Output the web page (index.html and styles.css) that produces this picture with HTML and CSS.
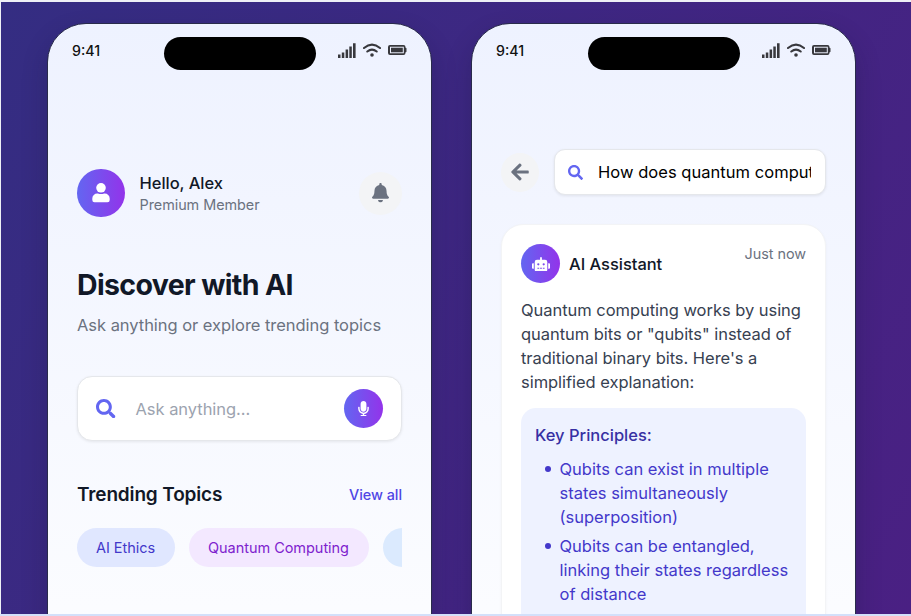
FILE: index.html
```html
<!DOCTYPE html>
<html lang="en">
<head>
<meta charset="utf-8">
<title>AI Search</title>
<link rel="stylesheet" href="styles.css">
</head>
<body>
<svg width="0" height="0" class="defs" aria-hidden="true">
  <symbol id="signal" viewBox="0 0 18 15"><path d="M0 11.500h2.500V15H0zM3.800 9.500h2.500V15H3.800zM7.600 6.500h2.500V15H7.600zM11.300 3.500h2.500v11.500h-2.500zM15 .3h2.600V15H15z"/></symbol>
  <symbol id="wifi" viewBox="0 0 18 15"><path class="arc" d="M1 5q8-6.600 16 0M4.300 8.500q4.700-3.700 9.400 0"/><circle cx="9" cy="12" r="1.800"/></symbol>
  <symbol id="battery" viewBox="0 0 19 10"><path fill-rule="evenodd" d="M2 0h13.500a2 2 0 0 1 2 2v.8h.2a.8.8 0 0 1 .8.8v2.800a.8.8 0 0 1-.8.8h-.2V8a2 2 0 0 1-2 2H2a2 2 0 0 1-2-2V2a2 2 0 0 1 2-2zm0 1.700v6.600h13.800V1.700z"/><path d="M3 2.700h11.800v4.600H3z"/></symbol>
  <symbol id="user" viewBox="0 0 18 20"><circle cx="9" cy="4.800" r="4.800"/><path d="M.3 17v-1.500a5 5 0 0 1 5-5h.6q3.100 1.200 6.200 0h.6a5 5 0 0 1 5 5V17q0 2.200-2.200 2.200h-13Q.3 19.200.3 17z"/></symbol>
  <symbol id="bell" viewBox="0 0 448 512"><path d="M224 512c35.300 0 64-28.700 64-64H160c0 35.400 28.600 64 64 64zm215.400-149.700c-19.300-20.800-55.500-52-55.500-154.300 0-77.700-54.500-139.900-127.900-155.200V32c0-17.700-14.300-32-32-32s-32 14.300-32 32v20.800C118.600 68.100 64.100 130.300 64.100 208c0 102.300-36.200 133.500-55.500 154.300-6 6.500-8.700 14.200-8.600 21.700.1 16.400 13 32 32.100 32h383.800c19.100 0 32-15.600 32.100-32 .1-7.500-2.600-15.300-8.600-21.700z"/></symbol>
  <symbol id="search" viewBox="0 0 512 512"><path d="M505 442.700 405.300 343c-4.500-4.500-10.600-7-17-7H372c27.600-35.300 44-79.700 44-128C416 93.100 322.900 0 208 0S0 93.100 0 208s93.100 208 208 208c48.300 0 92.700-16.400 128-44v16.300c0 6.400 2.500 12.500 7 17l99.700 99.700c9.400 9.400 24.600 9.400 33.900 0l28.300-28.300c9.400-9.400 9.400-24.600.1-34zM208 336c-70.700 0-128-57.200-128-128 0-70.700 57.200-128 128-128 70.700 0 128 57.200 128 128 0 70.700-57.200 128-128 128z"/></symbol>
  <symbol id="mic" viewBox="0 0 352 512"><path d="M176 352c53 0 96-43 96-96V96c0-53-43-96-96-96S80 43 80 96v160c0 53 43 96 96 96zm160-160h-16c-8.800 0-16 7.200-16 16v48c0 74.800-64.500 134.800-140.800 127.400C96.700 376.900 48 317.100 48 250.300V208c0-8.800-7.200-16-16-16H16c-8.800 0-16 7.200-16 16v40.200c0 89.600 63.900 169.500 152 181.700V464H96c-8.800 0-16 7.200-16 16v16c0 8.800 7.200 16 16 16h160c8.800 0 16-7.200 16-16v-16c0-8.800-7.200-16-16-16h-56v-33.800C285.700 418.500 352 344.900 352 256v-48c0-8.800-7.200-16-16-16z"/></symbol>
  <symbol id="arrow" viewBox="0 0 448 512"><path d="m257.500 445.100-22.200 22.200c-9.400 9.400-24.600 9.400-33.900 0L7 273c-9.400-9.400-9.400-24.600 0-33.900L201.400 44.700c9.400-9.400 24.600-9.400 33.900 0l22.200 22.200c9.500 9.500 9.300 25-.4 34.300L136.600 216H424c13.300 0 24 10.700 24 24v32c0 13.300-10.700 24-24 24H136.600l120.500 114.800c9.800 9.300 10 24.800.4 34.300z"/></symbol>
  <symbol id="robot" viewBox="0 0 640 512"><path d="M32 224h32v192H32a31.960 31.960 0 0 1-32-32V256a31.960 31.960 0 0 1 32-32zm512-48v272a64.060 64.060 0 0 1-64 64H160a64.060 64.060 0 0 1-64-64V176a79.970 79.970 0 0 1 80-80h112V32a32 32 0 0 1 64 0v64h112a79.970 79.970 0 0 1 80 80zm-280 80a40 40 0 1 0-40 40 40 40 0 0 0 40-40zm-8 128h-64v32h64zm96 0h-64v32h64zm104-128a40 40 0 1 0-40 40 40 40 0 0 0 40-40zm-8 128h-64v32h64zm192-128v128a31.960 31.960 0 0 1-32 32h-32V224h32a31.960 31.960 0 0 1 32 32z"/></symbol>
</svg>
<main class="stage">
  <section class="phone">
    <header class="status">
      <span class="time">9:41</span>
      <div class="island"></div>
      <div class="indicators"><svg class="i-signal"><use href="#signal"/></svg><svg class="i-wifi"><use href="#wifi"/></svg><svg class="i-battery"><use href="#battery"/></svg></div>
    </header>
    <div class="home">
      <div class="profile">
        <div class="avatar"><svg><use href="#user"/></svg></div>
        <div class="who"><p class="hello">Hello, Alex</p><p class="tier">Premium Member</p></div>
        <div class="round bell"><svg><use href="#bell"/></svg></div>
      </div>
      <h1>Discover with AI</h1>
      <p class="lead">Ask anything or explore trending topics</p>
      <div class="ask">
        <svg class="lens"><use href="#search"/></svg>
        <span class="placeholder">Ask anything...</span>
        <div class="mic"><svg><use href="#mic"/></svg></div>
      </div>
      <div class="section-head"><h2>Trending Topics</h2><span class="view">View all</span></div>
      <div class="chips"><span class="chip indigo">AI Ethics</span><span class="chip purple">Quantum Computing</span><span class="chip blue"></span></div>
    </div>
  </section>
  <section class="phone">
    <header class="status">
      <span class="time">9:41</span>
      <div class="island"></div>
      <div class="indicators"><svg class="i-signal"><use href="#signal"/></svg><svg class="i-wifi"><use href="#wifi"/></svg><svg class="i-battery"><use href="#battery"/></svg></div>
    </header>
    <div class="chat">
      <div class="query-row">
        <div class="round back"><svg><use href="#arrow"/></svg></div>
        <div class="query"><svg><use href="#search"/></svg><span class="query-text">How does quantum comput</span></div>
      </div>
      <article class="answer">
        <div class="answer-head"><div class="bot"><svg><use href="#robot"/></svg></div><span class="name">AI Assistant</span><span class="when">Just now</span></div>
        <p class="body">Quantum computing works by using<br>quantum bits or "qubits" instead of<br>traditional binary bits. Here's a<br>simplified explanation:</p>
        <div class="key">
          <h3>Key Principles:</h3>
          <ul>
            <li>Qubits can exist in multiple<br>states simultaneously<br>(superposition)</li>
            <li>Qubits can be entangled,<br>linking their states regardless<br>of distance</li>
          </ul>
        </div>
      </article>
    </div>
  </section>
</main>
</body>
</html>
```
FILE: styles.css
```css
* { box-sizing: border-box; margin: 0; padding: 0; }
body {
  height: 616px;
  overflow: hidden;
  background: #eef0f6;
  border-bottom: 2px solid #d3e0fa;
  padding: 2px 0 0 1px;
  font-family: Inter, "Liberation Sans", sans-serif;
  font-size: 16.500px;
  line-height: 24px;
  letter-spacing: -0.040px;
  white-space: nowrap;
}
.defs { display: none; }
svg { display: block; fill: currentColor; flex: none; }
.arc { fill: none; stroke: currentColor; stroke-width: 2.100; stroke-linecap: round; }
.stage {
  height: 612px;
  overflow: hidden;
  display: flex;
  gap: 39px;
  padding: 21px 0 0 46px;
  background: linear-gradient(120deg, #342d82, #4a2083);
}
.phone {
  flex: none;
  width: 385px;
  height: 830px;
  border: 1px solid #292b4b;
  border-radius: 39px;
  background: linear-gradient(#eef2ff, #ffffff 760px);
  box-shadow: 0 12px 24px rgba(20, 20, 50, .25);
}
.status {
  display: grid;
  grid-template-columns: 92px 152px 1fr;
  padding: 13px 24px 0;
  height: 46px;
}
.time { font-size: 14.200px; font-weight: 500; line-height: 28px; letter-spacing: 0; color: #111; }
.island { height: 32.500px; border-radius: 16.500px; background: #000; }
.indicators { display: flex; gap: 7px; height: 26px; align-items: center; justify-content: flex-end; color: #38383d; }
.i-signal { width: 18px; height: 15px; }
.i-wifi { width: 18px; height: 15px; }
.i-battery { width: 19px; height: 10px; }
.home { padding: 99px 29px 0; }
.profile { display: flex; align-items: center; height: 48px; }
.avatar, .mic, .bot, .round { display: flex; align-items: center; justify-content: center; border-radius: 50%; flex: none; }
.avatar, .mic, .bot { background: linear-gradient(90deg, #6366f1, #9333ea); color: #fff; }
.avatar { width: 48px; height: 48.500px; }
.avatar svg { width: 18px; height: 20px; }
.who { margin-left: 14.500px; flex: 1; }
.hello { font-weight: 500; line-height: 24px; color: #111827; }
.tier { font-size: 14.400px; line-height: 20px; color: #6b7280; }
.round { background: #f3f4f6; color: #6b7280; }
.bell { width: 43px; height: 43px; }
.bell svg { width: 17px; height: 19.500px; }
h1 { margin-top: 50px; font-size: 28.500px; line-height: 36px; font-weight: 700; color: #111827; letter-spacing: -0.64px; }
.lead { margin-top: 10px; color: #6b7280; }
.ask { margin-top: 39px; height: 65px; display: flex; align-items: center; padding: 0 18px; background: #fff; border: 1px solid #e5e7eb; border-radius: 15px; box-shadow: 0 1px 3px rgba(0, 0, 0, .08); }
.lens { width: 19.500px; height: 19.500px; color: #6366f1; }
.placeholder { flex: 1; margin-left: 20px; color: #9ca3af; }
.mic { width: 39px; height: 39px; }
.mic svg { width: 11px; height: 15.500px; }
.section-head { display: flex; justify-content: space-between; align-items: center; margin-top: 40px; height: 28px; }
h2 { font-size: 19px; font-weight: 600; color: #111827; letter-spacing: -0.15px; }
.view { font-size: 14.400px; font-weight: 500; color: #4f46e5; }
.chips { display: flex; gap: 14.500px; margin-top: 19px; overflow: hidden; }
.chip { flex: none; height: 39px; border-radius: 20px; padding: 0 19px; font-size: 14.500px; line-height: 39px; }
.indigo { width: 97.500px; background: #e0e7ff; color: #4338ca; }
.purple { width: 179.500px; background: #f3e8ff; color: #7e22ce; }
.blue { width: 120px; background: #dbeafe; }
.chat { padding: 79px 29px 0; }
.query-row { display: flex; align-items: center; justify-content: space-between; }
.back { width: 38px; height: 39px; }
.back svg { width: 18px; height: 20px; }
.query { width: 272px; height: 46px; display: flex; align-items: center; padding: 0 14px 0 13px; background: #fff; border: 1px solid #e5e7eb; border-radius: 11px; box-shadow: 0 1px 3px rgba(0, 0, 0, .08); }
.query svg { width: 15px; height: 15px; color: #6366f1; }
.query-text { flex: 1; margin-left: 15px; overflow: hidden; letter-spacing: 0.040px; color: #000; }
.answer { width: 325px; margin-top: 29px; height: 560px; padding: 19px 19px; background: #fff; border: 1px solid #f3f4f6; border-radius: 22px; box-shadow: 0 1px 3px rgba(0, 0, 0, .04); }
.answer-head { display: flex; align-items: center; height: 39px; }
.bot { width: 39px; height: 39px; }
.bot svg { width: 18px; height: 14.500px; margin-top: 1px; }
.name { flex: 1; margin-left: 9px; font-weight: 500; color: #111827; }
.when { font-size: 14.400px; line-height: 20px; align-self: flex-start; color: #6b7280; }
.body { margin-top: 15px; line-height: 24px; letter-spacing: -0.040px; color: #374151; }
.key { margin-top: 14px; height: 260px; padding: 15px 14px; border-radius: 15px; background: #eef2ff; }
h3 { font-size: 16.500px; line-height: 24px; font-weight: 500; letter-spacing: 0; color: #3730a3; }
ul { margin-top: 10px; padding-left: 24.500px; color: #4338ca; letter-spacing: 0; list-style: none; }
li { position: relative; margin-bottom: 5px; line-height: 24px; }
li::before { content: ""; position: absolute; left: -15px; top: 9px; width: 6px; height: 6px; border-radius: 50%; background: currentColor; }
```
